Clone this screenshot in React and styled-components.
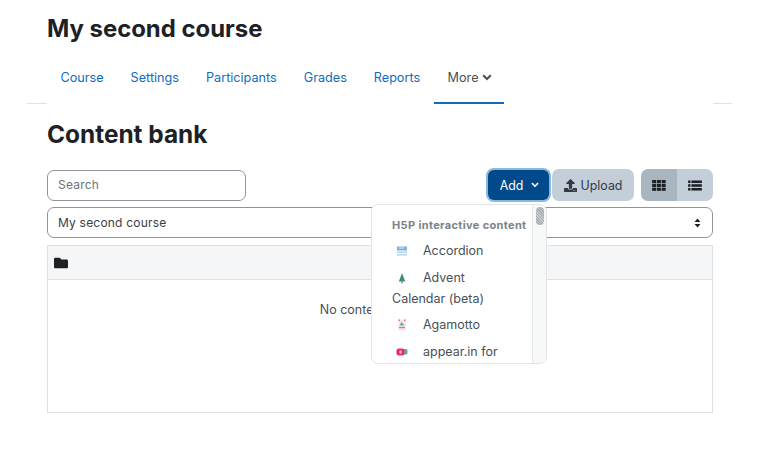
import React from "react";
import styled, { createGlobalStyle } from "styled-components";
import { FaUpload, FaFolder } from "react-icons/fa";

const Global = createGlobalStyle`
  html, body { margin: 0; padding: 0; background: #fff; }
  body {
    font-family: Inter, "Liberation Sans", sans-serif;
    color: #1d2125;
    font-size: 13px;
    overflow: hidden;
  }
  * { box-sizing: border-box; }
`;

const Page = styled.div`
  position: relative;
  width: 757px;
  height: 454px;
  padding: 14px 44px 0 47px;
`;

const CourseTitle = styled.h1`
  margin: 0;
  font-size: 23.9px;
  line-height: 30px;
  font-weight: 700;
`;

const NavRule = styled.div`
  margin: 15px -19px 0 -20px;
  padding: 0 19px 0 20px;
  height: 45px;
  border-bottom: 1px solid #dee2e6;
`;

const Nav = styled.nav`
  display: flex;
  height: 45px;
  background: #fff;
`;

const NavItem = styled.a`
  display: flex;
  align-items: center;
  gap: 3px;
  height: 45px;
  padding: ${(p) => (p.$active ? "0 12px 7px 14px" : "0 13.5px 7px")};
  font-size: 12.65px;
  color: ${(p) => (p.$active ? "#495057" : "#0f6cbf")};
  border-bottom: 2px solid ${(p) => (p.$active ? "#0f6cbf" : "transparent")};
`;

const Heading = styled.h2`
  margin: 15px 0 0;
  font-size: 24.4px;
  line-height: 30px;
  font-weight: 700;
`;

const Toolbar = styled.div`
  display: flex;
  align-items: center;
  margin-top: 20px;
  height: 32px;
`;

const Search = styled.input`
  width: 199px;
  height: 31px;
  padding: 0 10px 1px;
  border: 1px solid #8f959e;
  border-radius: 7px;
  font: 12px Inter, sans-serif;
  letter-spacing: 0.2px;
  &::placeholder { color: #6a737b; opacity: 1; }
`;

const Actions = styled.div`
  display: flex;
  align-items: center;
  margin-left: auto;
`;

const Button = styled.button`
  display: flex;
  align-items: center;
  justify-content: center;
  height: 32px;
  border: 0;
  padding: 0;
  font: 12.4px Inter, sans-serif;
  background: #ced4da;
  color: #1d2125;
`;

const AddButton = styled(Button)`
  width: 61px;
  height: 30px;
  gap: 8px;
  padding-left: 2px;
  margin-right: 3px;
  border-radius: 6px;
  background: #004a8c;
  color: #fff;
  box-shadow: 0 0 0 2px #8cb6dc;
  svg { width: 8px; height: 6px; }
`;

const UploadButton = styled(Button)`
  width: 82px;
  gap: 4px;
  margin-right: 7px;
  border-radius: 7px;
  background: #c3ced8;
  color: #333a41;
  svg { width: 13px; height: 13px; }
`;

const ViewButton = styled(Button)`
  width: 36px;
  background: ${(p) => (p.$active ? "#a9b5bf" : "#c3ced8")};
  border-radius: ${(p) => (p.$first ? "7px 0 0 7px" : "0 7px 7px 0")};
`;

const ContextSelect = styled.div`
  display: flex;
  align-items: center;
  justify-content: space-between;
  margin-top: 6px;
  height: 31px;
  padding: 0 11px 0 10px;
  border: 1px solid #8f959e;
  border-radius: 7px;
  font-size: 12px;
  letter-spacing: 0.2px;
  color: #3a4046;
`;

const Table = styled.div`
  margin-top: 7px;
  height: 168px;
  border: 1px solid #dee2e6;
`;

const TableHead = styled.div`
  display: flex;
  align-items: center;
  height: 34px;
  padding-left: 6px;
  background: #f5f6f7;
  border-bottom: 1px solid #dee2e6;
  svg { width: 14px; height: 14px; }
`;

const EmptyNote = styled.div`
  padding-top: 22px;
  text-align: center;
  font-size: 12.5px;
  color: #495057;
`;

const Menu = styled.div`
  position: absolute;
  left: 371px;
  top: 204px;
  width: 176px;
  height: 160px;
  display: flex;
  overflow: hidden;
  background: #fff;
  border: 1px solid #e2e4e7;
  border-radius: 7px;
`;

const MenuBody = styled.div`
  flex: 1;
  padding: 13px 16px 0 20px;
  overflow: hidden;
`;

const MenuHeading = styled.div`
  font-size: 11px;
  line-height: 14px;
  font-weight: 700;
  color: #7b8289;
  letter-spacing: 0.35px;
  white-space: nowrap;
`;

const MenuItem = styled.div`
  margin-top: ${(p) => p.$gap}px;
  font-size: 12.5px;
  line-height: 21px;
  color: #495057;
`;

const ItemIcon = styled.svg`
  display: inline-block;
  width: 12px;
  height: 12px;
  margin: 0 15px 0 4px;
  vertical-align: -2px;
`;

const Scrollbar = styled.div`
  width: 14px;
  padding: 2px 3px;
  background: #f7f8f8;
  border-left: 1px solid #e6e8ea;
`;

const Thumb = styled.div`
  width: 8px;
  height: 18px;
  border-radius: 4px;
  background: repeating-linear-gradient(45deg, #a8adb2 0 1px, #c6cacd 1px 2px);
`;

const Chevron = () => (
  <svg width="10" height="7" viewBox="0 0 10 7" fill="none" stroke="currentColor" strokeWidth="2">
    <path d="M1.2 1.2 5 5l3.8-3.8" />
  </svg>
);

const SelectArrows = () => (
  <svg width="7" height="12" viewBox="0 0 7 12" fill="#1d2125">
    <path d="M3.5 1.5 6.5 5H.5zM3.5 10.5.5 7h6z" />
  </svg>
);

const GridIcon = () => (
  <svg width="14" height="11" viewBox="0 0 15 12" fill="#1d2125">
    {[0, 4.2, 8.4].map((y) =>
      [0, 5.2, 10.4].map((x) => <rect key={`${x}-${y}`} x={x} y={y} width="4.4" height="3.4" />)
    )}
  </svg>
);

const ListIcon = () => (
  <svg width="14" height="11" viewBox="0 0 15 12" fill="#1d2125">
    {[0.5, 4.6, 8.7].map((y) => (
      <g key={y}>
        <rect x="0" y={y} width="2.6" height="2.8" />
        <rect x="3.6" y={y} width="11.4" height="2.8" />
      </g>
    ))}
  </svg>
);

const AccordionIcon = () => (
  <ItemIcon viewBox="0 0 12 12">
    <rect x="1" y="1.5" width="10" height="4" fill="#7fb0d6" />
    <rect x="3" y="2.5" width="5" height="1" fill="#dcebf5" />
    <rect x="1" y="6.5" width="10" height="1.5" fill="#b8d2e5" />
    <rect x="1" y="9" width="10" height="1.5" fill="#b8d2e5" />
  </ItemIcon>
);

const TreeIcon = () => (
  <ItemIcon viewBox="0 0 12 12">
    <path d="M6 1 9.2 9.6H2.8z" fill="#3f8f78" />
    <rect x="5.3" y="9.6" width="1.4" height="1.6" fill="#7a6a55" />
  </ItemIcon>
);

const AgamottoIcon = () => (
  <ItemIcon viewBox="0 0 12 12">
    <rect x="2.5" y="0.5" width="7" height="11" rx="1" fill="#f3e6e8" />
    <path d="M3.5 6.5 5.5 3 8.5 6.5z" fill="#5fb09a" />
    <rect x="3" y="8" width="6" height="1.2" fill="#ea6a84" />
    <rect x="2.5" y="0.5" width="1.5" height="1.5" fill="#ea6a84" />
    <rect x="8" y="0.5" width="1.5" height="1.5" fill="#ea6a84" />
  </ItemIcon>
);

const AppearIcon = () => (
  <ItemIcon viewBox="0 0 12 12">
    <rect x="6" y="3" width="5.5" height="5.5" rx="1.5" fill="#4cb79c" />
    <rect x="0.5" y="2.5" width="8" height="7" rx="2" fill="#ec2f5b" />
    <rect x="3.5" y="4.5" width="2" height="3" fill="#f9c3cf" />
  </ItemIcon>
);

export default function App() {
  return (
    <Page>
      <Global />
      <CourseTitle>My second course</CourseTitle>
      <NavRule>
        <Nav>
          <NavItem>Course</NavItem>
          <NavItem>Settings</NavItem>
          <NavItem>Participants</NavItem>
          <NavItem>Grades</NavItem>
          <NavItem>Reports</NavItem>
          <NavItem $active>
            More <Chevron />
          </NavItem>
        </Nav>
      </NavRule>
      <Heading>Content bank</Heading>
      <Toolbar>
        <Search placeholder="Search" />
        <Actions>
          <AddButton>
            Add <Chevron />
          </AddButton>
          <UploadButton>
            <FaUpload /> Upload
          </UploadButton>
          <ViewButton $first $active>
            <GridIcon />
          </ViewButton>
          <ViewButton>
            <ListIcon />
          </ViewButton>
        </Actions>
      </Toolbar>
      <ContextSelect>
        My second course
        <SelectArrows />
      </ContextSelect>
      <Table>
        <TableHead>
          <FaFolder />
        </TableHead>
        <EmptyNote>No content available</EmptyNote>
      </Table>
      <Menu>
        <MenuBody>
          <MenuHeading>H5P interactive content</MenuHeading>
          <MenuItem $gap={8}>
            <AccordionIcon />
            Accordion
          </MenuItem>
          <MenuItem $gap={6}>
            <TreeIcon />
            Advent Calendar (beta)
          </MenuItem>
          <MenuItem $gap={5}>
            <AgamottoIcon />
            Agamotto
          </MenuItem>
          <MenuItem $gap={6}>
            <AppearIcon />
            appear.in for
          </MenuItem>
        </MenuBody>
        <Scrollbar>
          <Thumb />
        </Scrollbar>
      </Menu>
    </Page>
  );
}
